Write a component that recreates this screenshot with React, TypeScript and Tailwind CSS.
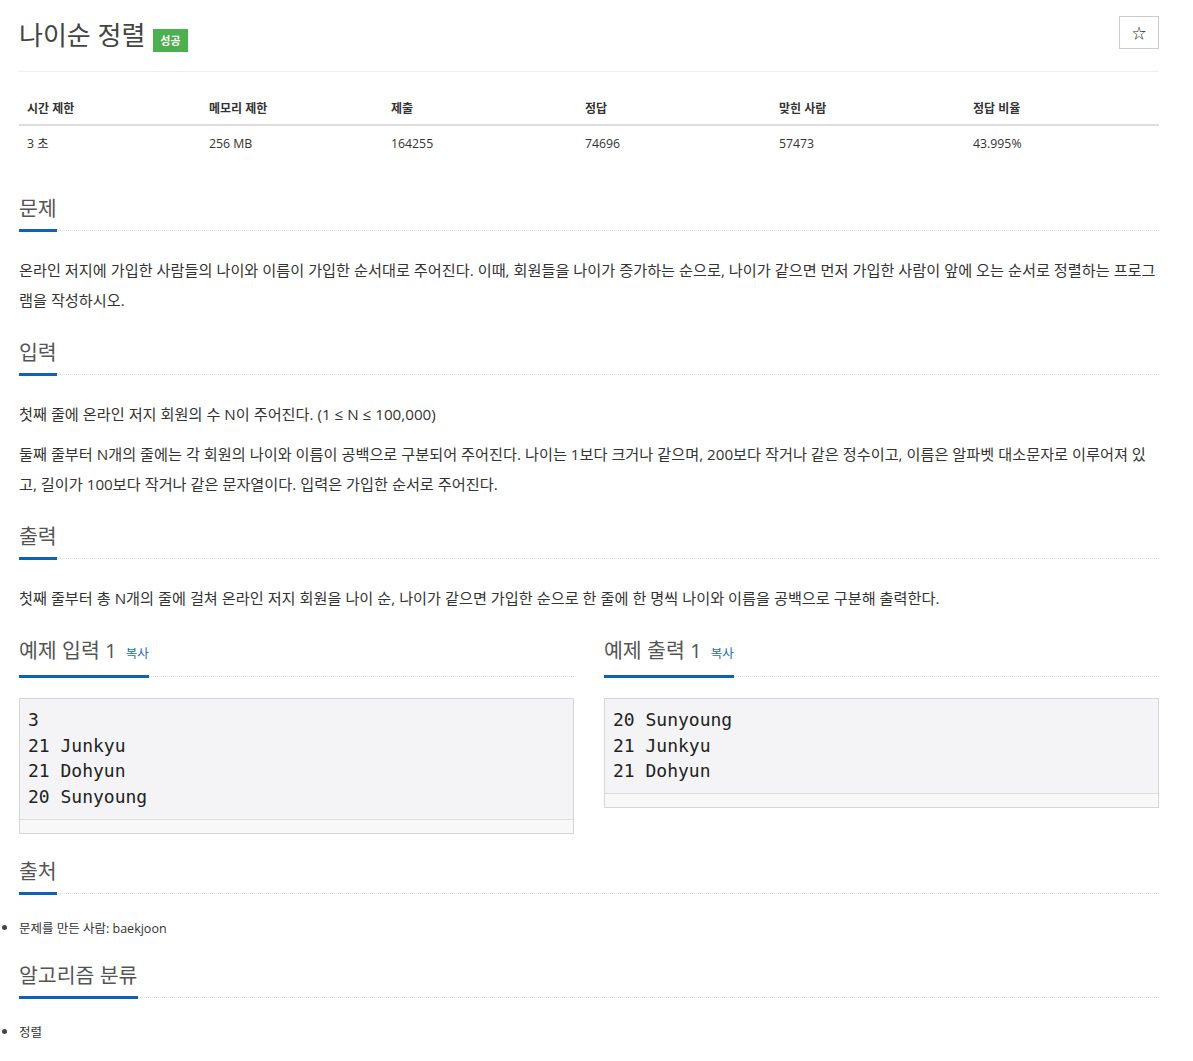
const font = { fontFamily: '"Open Sans", "Noto Sans CJK KR", sans-serif' };

const stats = [
  { label: '시간 제한', value: '3 초', w: 'w-[182px]' },
  { label: '메모리 제한', value: '256 MB', w: 'w-[182px]' },
  { label: '제출', value: '164255', w: 'w-[194px]' },
  { label: '정답', value: '74696', w: 'w-[194px]' },
  { label: '맞힌 사람', value: '57473', w: 'w-[194px]' },
  { label: '정답 비율', value: '43.995%', w: '' },
];

function Headline({ title, copy }: { title: string; copy?: boolean }) {
  return (
    <div className={`flex border-b border-dotted border-[#ddd] ${copy ? 'mb-[21px]' : 'mb-[24px]'}`}>
      <h2 className="flex items-baseline text-[20.5px] leading-[28px] pb-[7px] border-b-[3px] border-[#0e62b4] -mb-[2px] text-[#555]">
        {title}
        {copy && <span className="ml-[9px] text-[12.5px] text-[#2a6cc0]">복사</span>}
      </h2>
    </div>
  );
}

function Sample({ title, lines }: { title: string; lines: string[] }) {
  return (
    <div>
      <Headline title={title} copy />
      <div className="border border-[#d5d5da] bg-[#f4f4f6]">
        <pre
          className="px-[8px] pt-[8px] pb-[9px] text-[18px] leading-[25.7px] text-[#222]"
          style={{ fontFamily: '"DejaVu Sans Mono", monospace' }}
        >
          {lines.join('\n')}
        </pre>
        <div className="h-[14px] border-t border-[#ddd] bg-[#f8f8f8]" />
      </div>
    </div>
  );
}

export default function App() {
  return (
    <div className="min-h-screen bg-white text-[#333]" style={font}>
      <div className="ml-[19px] w-[1140px] pt-[16px] pb-[20px]">
        <div className="flex items-start justify-between">
          <h1 className="flex items-center mt-[2px] text-[26px] leading-[33px] text-[#444]">
            나이순 정렬
            <span className="ml-[8px] mt-[11px] inline-flex h-[23px] px-[7px] items-center bg-[#4caf50] text-white text-[11px] font-bold">
              성공
            </span>
          </h1>
          <button className="w-[40px] h-[33px] border border-[#ccc] bg-white text-[14px] text-[#222] flex items-center justify-center">
            ☆
          </button>
        </div>
        <div className="mt-[19px] border-t border-[#eee]" />

        <table className="mt-[20px] w-full text-[12px] text-left">
          <thead>
            <tr>
              {stats.map(s => (
                <th key={s.label} className={`${s.w} px-[8px] pt-[7px] pb-[5px] leading-[20px] font-bold border-b-2 border-[#ddd]`}>
                  {s.label}
                </th>
              ))}
            </tr>
          </thead>
          <tbody>
            <tr>
              {stats.map(s => (
                <td key={s.label} className="px-[8px] pt-[8px] pb-[7px] leading-[20px] text-[12.3px]">
                  {s.value}
                </td>
              ))}
            </tr>
          </tbody>
        </table>

        <section className="mt-[33px]">
          <Headline title="문제" />
          <p className="text-[15.2px] leading-[30px]">
            온라인 저지에 가입한 사람들의 나이와 이름이 가입한 순서대로 주어진다. 이때, 회원들을 나이가 증가하는 순으로, 나이가 같으면 먼저 가입한 사람이 앞에 오는 순서로 정렬하는 프로그램을 작성하시오.
          </p>
        </section>

        <section className="mt-[23px]">
          <Headline title="입력" />
          <p className="text-[15.2px] leading-[30px] mb-[10px]">첫째 줄에 온라인 저지 회원의 수 N이 주어진다. (1 ≤ N ≤ 100,000)</p>
          <p className="text-[15.2px] leading-[30px]">
            둘째 줄부터 N개의 줄에는 각 회원의 나이와 이름이 공백으로 구분되어 주어진다. 나이는 1보다 크거나 같으며, 200보다 작거나 같은 정수이고, 이름은 알파벳 대소문자로 이루어져 있고, 길이가 100보다 작거나 같은 문자열이다. 입력은 가입한 순서로 주어진다.
          </p>
        </section>

        <section className="mt-[23px]">
          <Headline title="출력" />
          <p className="text-[15.2px] leading-[30px]">
            첫째 줄부터 총 N개의 줄에 걸쳐 온라인 저지 회원을 나이 순, 나이가 같으면 가입한 순으로 한 줄에 한 명씩 나이와 이름을 공백으로 구분해 출력한다.
          </p>
        </section>

        <section className="mt-[23px] grid grid-cols-2 gap-[30px] items-start">
          <Sample title="예제 입력 1" lines={['3', '21 Junkyu', '21 Dohyun', '20 Sunyoung']} />
          <Sample title="예제 출력 1" lines={['20 Sunyoung', '21 Junkyu', '21 Dohyun']} />
        </section>

        <section className="mt-[23px]">
          <Headline title="출처" />
          <ul className="list-disc text-[12.5px] leading-[20px] marker:text-[14px] marker:text-[#444]">
            <li>문제를 만든 사람: baekjoon</li>
          </ul>
        </section>

        <section className="mt-[22px]">
          <Headline title="알고리즘 분류" />
          <ul className="list-disc text-[12.5px] leading-[20px] marker:text-[14px] marker:text-[#444]">
            <li>정렬</li>
          </ul>
        </section>
      </div>
    </div>
  );
}
